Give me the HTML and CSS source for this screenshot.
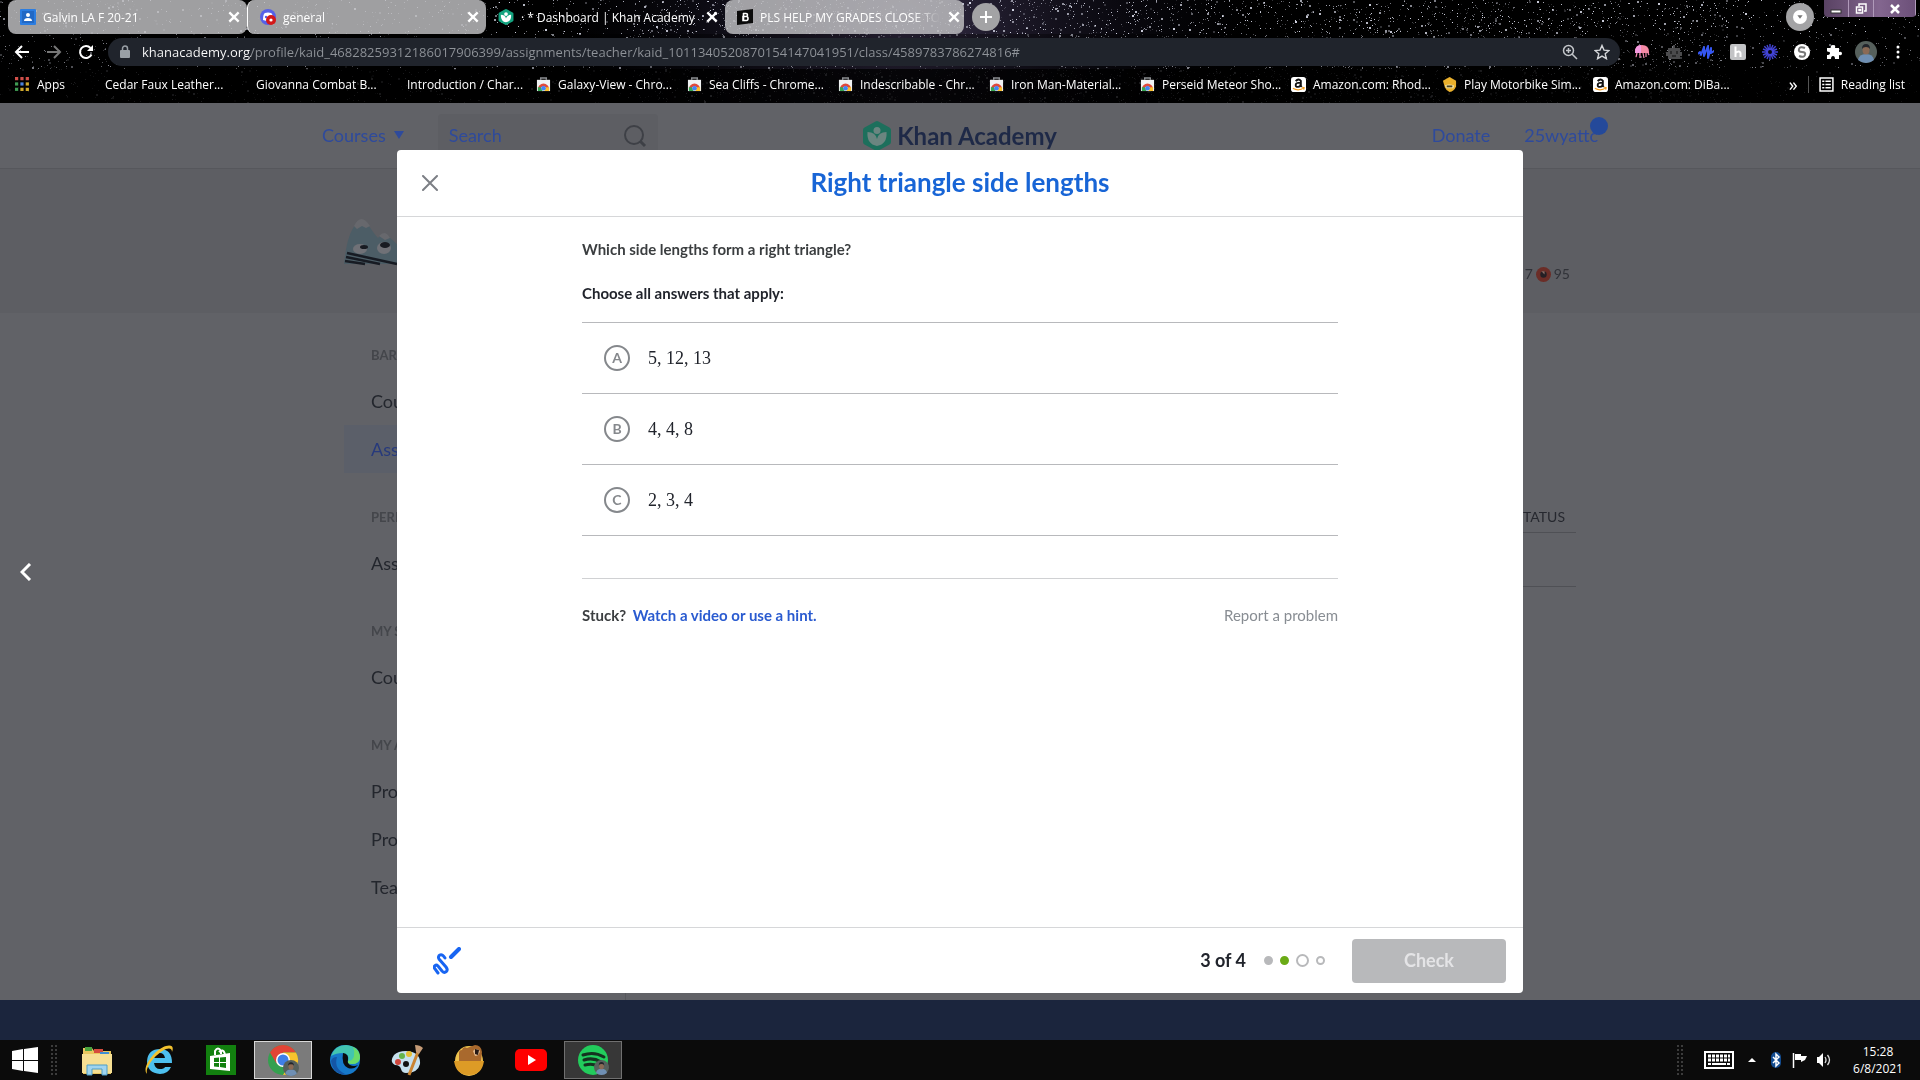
FILE: index.html
```html
<!DOCTYPE html>
<html lang="en">
  <head>
    <meta charset="UTF-8" />
    <meta name="viewport" content="width=device-width, initial-scale=1.0" />
    <title>Dashboard | Khan Academy</title>
    <link rel="stylesheet" href="styles.css">
  </head>
  <body>
    <svg class="symbols" aria-hidden="true">
      <symbol id="webstore" viewBox="0 0 16 16">
        <path d="M5 3V1h6v2" fill="none" stroke="#8a8d91" stroke-width="1.5" />
        <path d="M1 3h14v12H1z" fill="#f1f3f4" />
        <path d="M2 13a6 6 0 0 1 12 0l-3 0a3 3 0 0 0-6 0z" fill="#e04a3c" />
        <path d="M2 11v4h5l-2-4z" fill="#35a853" />
        <path d="M14 11v4H9l2-4z" fill="#fbc02d" />
        <circle cx="8" cy="12" r="2.5" fill="#4285f4" />
      </symbol>
      <symbol id="amazon" viewBox="0 0 16 16">
        <rect width="16" height="16" rx="3" fill="#fff" />
        <path d="M5 4.500Q8 1 10.500 4v5.500l1 1M10.300 6Q5 6 5 8.500t2.500 2q2.800 0 2.800-3" fill="none" stroke="#111" stroke-width="2" />
        <path d="M2 12q6 3.500 12-.500M12 11l2 .500-.500 2" fill="none" stroke="#f49b1a" stroke-width="1.300" />
      </symbol>
      <symbol id="leaf" viewBox="0 0 28 30">
        <path d="M12.500.5q1.500-.8 3 0l11 6q1.500 1 1.500 2.500v12q0 1.700-1.500 2.500l-11 6q-1.500.8-3 0l-11-6Q0 22.700 0 21V9q0-1.600 1.500-2.500z" />
        <circle cx="14" cy="9.500" r="3.500" class="leaf-cut" />
        <path d="M4.500 11q8 0 9.500 7 1.500-7 9.500-7 1 12-9.500 14Q3.500 23 4.500 11z" class="leaf-cut" />
      </symbol>
      <symbol id="close" viewBox="0 0 12 12">
        <path d="M2 2l8 8M10 2l-8 8" fill="none" stroke="currentColor" stroke-width="2" />
      </symbol>
      <symbol id="user" viewBox="0 0 22 22">
        <circle cx="11" cy="11" r="11" fill="#56605c" />
        <path d="M3 19q1-6 8-6t8 6q-8 6-16 0z" fill="#6f8fb3" />
        <ellipse cx="11" cy="9" rx="3.500" ry="4.500" fill="#8b6a55" />
        <path d="M7 8q0-5 4-5t4 5q-1-2-4-2t-4 2z" fill="#22252b" />
      </symbol>
    </svg>

    <header class="browser">
      <canvas class="stars" id="stars"></canvas>

      <div class="tab-strip">
        <div class="tab tab-idle">
          <svg class="favicon" viewBox="0 0 16 16"><rect width="16" height="16" rx="1" fill="#2b7de1" /><rect x="2" y="2" width="12" height="12" fill="#2268c4" /><circle cx="8" cy="6" r="2" fill="#fff" /><path d="M4 12q0-3 4-3t4 3z" fill="#fff" /></svg>
          <span class="tab-title">Galvin LA F 20-21</span>
          <button class="tab-close" aria-label="Close tab"><svg><use href="#close" /></svg></button>
        </div>
        <div class="tab tab-idle">
          <svg class="favicon" viewBox="0 0 16 16"><circle cx="8" cy="8" r="8" fill="#5560e8" /><path d="M3 11q0-6 2-7 3-1 6 0 2 1 2 7-5 2-10 0z" fill="#fff" /><circle cx="6" cy="8" r="1.200" fill="#5560e8" /><circle cx="11" cy="11" r="5" fill="#d41818" /><circle cx="11" cy="11" r="1.600" fill="#fff" /></svg>
          <span class="tab-title">general</span>
          <button class="tab-close" aria-label="Close tab"><svg><use href="#close" /></svg></button>
        </div>
        <div class="tab">
          <svg class="favicon favicon-khan"><use href="#leaf" /></svg>
          <span class="tab-title">· * Dashboard | Khan Academy</span>
          <button class="tab-close" aria-label="Close tab"><svg><use href="#close" /></svg></button>
        </div>
        <div class="tab tab-idle">
          <svg class="favicon" viewBox="0 0 16 16"><path d="M0 2l16-2v14L0 16z" fill="#0b0b0b" /><path d="M6 4.500h3q1.500 0 1.500 1.500T9 7.500H6M6 7.500h3.500q1.500 0 1.500 2t-1.500 2H6zM6.500 4v8" fill="none" stroke="#fff" stroke-width="1.600" /></svg>
          <span class="tab-title tab-title-fade">PLS HELP MY GRADES CLOSE TO</span>
          <button class="tab-close" aria-label="Close tab"><svg><use href="#close" /></svg></button>
        </div>
        <button class="round-button new-tab" aria-label="New tab">
          <svg viewBox="0 0 14 14"><path d="M7 1v12M1 7h12" stroke="#fff" stroke-width="2" /></svg>
        </button>
        <button class="round-button tab-search" aria-label="Search tabs">
          <svg viewBox="0 0 16 16"><circle cx="8" cy="8" r="8" fill="#fff" /><path d="M5 6h6l-3 4z" fill="#777" /></svg>
        </button>
        <div class="window-controls">
          <button aria-label="Minimize"><svg viewBox="0 0 14 12"><rect x="2" y="7" width="10" height="3" fill="#fff" stroke="#333" /></svg></button>
          <button aria-label="Restore"><svg viewBox="0 0 14 12"><path d="M5 3V1h7v7h-2M2.500 4h6v6h-6zM5 6.500h1.500v1H5z" fill="none" stroke="#fff" stroke-width="1.500" /></svg></button>
          <button class="window-close" aria-label="Close"><svg viewBox="0 0 14 12"><path d="M3 2l8 8M11 2l-8 8" stroke="#fff" stroke-width="2.500" /></svg></button>
        </div>
      </div>

      <div class="toolbar">
        <button class="tool" aria-label="Back"><svg viewBox="0 0 16 16"><path d="M15 8H2M8 2L2 8l6 6" fill="none" stroke="#fff" stroke-width="2" /></svg></button>
        <button class="tool" aria-label="Forward"><svg viewBox="0 0 16 16"><path d="M1 8h13M8 2l6 6-6 6" fill="none" stroke="#777" stroke-width="2" /></svg></button>
        <button class="tool" aria-label="Reload"><svg viewBox="0 0 16 16"><path d="M13.500 10.500A6 6 0 1 1 12.500 4" fill="none" stroke="#fff" stroke-width="2" /><path d="M15 1v6H9z" fill="#fff" /></svg></button>
        <div class="address-bar">
          <svg class="lock" viewBox="0 0 10 14"><rect y="5" width="10" height="8" rx="1" fill="#9aa0a6" /><path d="M2.500 6V3.500a2.500 2.500 0 0 1 5 0V6" fill="none" stroke="#9aa0a6" stroke-width="1.500" /></svg>
          <input class="address" type="text" aria-label="Address" value="khanacademy.org/profile/kaid_46828259312186017906399/assignments/teacher/kaid_1011340520870154147041951/class/4589783786274816#">
          <button class="tool" aria-label="Zoom"><svg viewBox="0 0 16 16"><circle cx="6.500" cy="6.500" r="5" fill="none" stroke="#c3c6ca" stroke-width="1.500" /><path d="M10 10l5 5M4 6.500h5M6.500 4v5" stroke="#c3c6ca" stroke-width="1.500" /></svg></button>
          <button class="tool" aria-label="Bookmark this tab"><svg viewBox="0 0 16 16"><path d="M8 1.500l2 4.600 5 .4-3.800 3.300 1.200 4.900L8 12.100l-4.400 2.600 1.200-4.900L1 6.500l5-.4z" fill="none" stroke="#d5d7da" stroke-width="1.400" /></svg></button>
        </div>
        <div class="extensions">
          <button class="tool" aria-label="Jellyfish"><svg viewBox="0 0 16 16"><path d="M1 8q0-7 7-7t7 7v1H1z" fill="#f58aa5" /><path d="M1 8q0-7 6-7v8H1z" fill="#f59ae0" /><path d="M3 9l-1 4M6 9v5M9 9l1 5M12 9v4M14 9l1 2" stroke="#f58ab0" stroke-width="1.200" /></svg></button>
          <button class="tool" aria-label="Robot"><svg viewBox="0 0 16 16"><path d="M7 1h2v3h5v4h2v4h-2v3H2v-3H0V8h2V4h5z" fill="#4b4b4d" /><path d="M5 7v3M11 7v3M6 12h4" stroke="#222" stroke-width="1.500" /></svg></button>
          <button class="tool" aria-label="Voice"><svg viewBox="0 0 16 16"><path d="M0 10l2-2 1 3 3-8v9l4-10v12l3-10v5l3-2" fill="none" stroke="#3556f2" stroke-width="2" stroke-linejoin="round" /></svg></button>
          <button class="tool" aria-label="Honey"><svg viewBox="0 0 16 16"><rect width="16" height="16" rx="2" fill="#c2c3c5" /><path d="M5.500 2.500v10.500M5.500 9q4-3 5 0v4" fill="none" stroke="#fff" stroke-width="2" /></svg></button>
          <button class="tool" aria-label="Loom"><svg viewBox="0 0 16 16"><path d="M8 0v16M0 8h16M2.300 2.300l11.400 11.400M13.700 2.300L2.300 13.700M5 1l6 14M11 1L5 15M1 5l14 6M15 5L1 11" stroke="#4344d8" stroke-width="1.400" /><circle cx="8" cy="8" r="3" fill="#4344d8" /><circle cx="8" cy="8" r="2" fill="#05050a" /></svg></button>
          <button class="tool" aria-label="Shop"><svg viewBox="0 0 16 16"><circle cx="8" cy="8" r="8" fill="#fff" /><path d="M11 4q-5-2-6 1t3 3 3 3-6 1" fill="none" stroke="#777" stroke-width="2" /></svg></button>
          <button class="tool" aria-label="Extensions"><svg viewBox="0 0 16 16"><path d="M1 4h4q-1-3 2-3t2 3h4v4q3-1 3 1.500T13 11v4H9q0-3-2-3t-2 3H1v-4q3 0 3-2T1 7.500z" fill="#fff" /></svg></button>
          <button class="tool tool-user" aria-label="Profile"><svg><use href="#user" /></svg></button>
          <button class="tool" aria-label="Menu"><svg viewBox="0 0 16 16"><circle cx="8" cy="3" r="1.500" fill="#fff" /><circle cx="8" cy="8" r="1.500" fill="#fff" /><circle cx="8" cy="13" r="1.500" fill="#fff" /></svg></button>
        </div>
      </div>

      <nav class="bookmarks">
        <a href="#" class="apps">
          <svg viewBox="0 0 14 14"><path d="M0 0h3v3H0zM5 0h3v3H5zM10 0h3v3h-3z" fill="#d2504a" /><path d="M0 5h3v3H0z" fill="#3f9b53" /><path d="M5 5h3v3H5z" fill="#4b83dd" /><path d="M10 5h3v3h-3z" fill="#d0a92d" /><path d="M0 10h3v3H0z" fill="#3f9b53" /><path d="M5 10h3v3H5zM10 10h3v3h-3z" fill="#d0a92d" /></svg>
          Apps
        </a>
        <a href="#"><svg></svg>Cedar Faux Leather...</a>
        <a href="#"><svg></svg>Giovanna Combat B...</a>
        <a href="#"><svg></svg>Introduction / Char...</a>
        <a href="#"><svg><use href="#webstore" /></svg>Galaxy-View - Chro...</a>
        <a href="#"><svg><use href="#webstore" /></svg>Sea Cliffs - Chrome...</a>
        <a href="#"><svg><use href="#webstore" /></svg>Indescribable - Chr...</a>
        <a href="#"><svg><use href="#webstore" /></svg>Iron Man-Material...</a>
        <a href="#"><svg><use href="#webstore" /></svg>Perseid Meteor Sho...</a>
        <a href="#"><svg><use href="#amazon" /></svg>Amazon.com: Rhod...</a>
        <a href="#"><svg viewBox="0 0 16 16"><path d="M8 0l7 4v6q-2 5-7 6-4-2-5-5L1 4z" fill="#eab02c" /><path d="M3 9q4-2 10 0l-1 3H5z" fill="#f5e6a8" /><path d="M5 10h6" stroke="#4b4320" stroke-width="2" /></svg>Play Motorbike Sim...</a>
        <a href="#"><svg><use href="#amazon" /></svg>Amazon.com: DiBa...</a>
        <button class="more" aria-label="More bookmarks">»</button>
        <a href="#" class="reading-list">
          <svg viewBox="0 0 14 14"><path d="M1 1h12v12H1zM3 4h2M6 4h5M3 7h2M6 7h5M3 10h2M6 10h5" fill="none" stroke="#fff" stroke-width="1.400" /></svg>
          Reading list
        </a>
      </nav>
    </header>

    <div class="page">
      <header class="site-header">
        <div class="site-header-inner">
          <div class="header-left">
            <a href="#" class="header-link">Courses <svg viewBox="0 0 10 8"><path d="M0 0h10L5 8z" fill="currentColor" /></svg></a>
            <label class="search">
              <input type="text" placeholder="Search" aria-label="Search">
              <svg viewBox="0 0 24 24"><circle cx="11" cy="11" r="9" fill="none" stroke="currentColor" stroke-width="2" /><path d="M17 17l5 5" stroke="currentColor" stroke-width="3" /></svg>
            </label>
          </div>
          <a href="#" class="logo"><svg><use href="#leaf" /></svg>Khan Academy</a>
          <div class="header-right">
            <a href="#" class="header-link">Donate</a>
            <a href="#" class="header-link user-link">25wyattc<span class="badge"></span></a>
          </div>
        </div>
      </header>

      <div class="banner">
        <div class="banner-inner">
          <svg class="avatar" viewBox="0 0 80 50">
            <path d="M0 48Q3 18 12 8q6-8 13 2 6 9 9 12 6-7 11-1 15 12 22 27z" fill="#4c5d66" />
            <path d="M10 10q7-14 16 0l-4 2-4-2-5 3zM35 20q6-7 11 2l-5 2z" fill="#67686d" />
            <ellipse cx="16" cy="33" rx="7" ry="5" fill="#707177" /><ellipse cx="40" cy="32" rx="7" ry="6" fill="#707177" />
            <ellipse cx="20" cy="31" rx="4" ry="2" fill="#181b22" /><ellipse cx="41" cy="29" rx="5" ry="3" fill="#181b22" />
            <path d="M3 37l50 11M2 41l34 7M1 45l20 3" stroke="#171b23" stroke-width="2.500" />
          </svg>
          <div class="points">
            <span>7</span>
            <svg viewBox="0 0 14 14"><circle cx="7" cy="7" r="7" fill="#6b2d27" /><circle cx="7" cy="7" r="3" fill="#241f24" /><path d="M5 4h3v3z" fill="#8b6a62" /></svg>
            <span>95</span>
          </div>
        </div>
      </div>

      <div class="content">
        <nav class="sidebar">
          <h2>BARRETT MATH</h2>
          <a href="#">Course mastery</a>
          <a href="#" class="active">Assignments</a>
          <h2>PERIOD 2</h2>
          <a href="#">Assignments</a>
          <h2>MY STUFF</h2>
          <a href="#">Courses</a>
          <h2>MY ACCOUNT</h2>
          <a href="#">Progress</a>
          <a href="#">Profile</a>
          <a href="#">Teachers</a>
        </nav>
        <main class="assignments">
          <table>
            <thead><tr><th>STATUS</th></tr></thead>
            <tbody><tr><td></td></tr></tbody>
          </table>
        </main>
      </div>

      <div class="overlay">
        <button class="previous" aria-label="Previous"><svg viewBox="0 0 12 18"><path d="M10 1L2 9l8 8" fill="none" stroke="#fff" stroke-width="3" /></svg></button>
        <section class="modal" role="dialog" aria-labelledby="exerciseTitle">
          <div class="modal-header">
            <button class="modal-close" aria-label="Close"><svg viewBox="0 0 16 16"><path d="M1 1l14 14M15 1L1 15" stroke="currentColor" stroke-width="2" stroke-linecap="round" /></svg></button>
            <h1 id="exerciseTitle">Right triangle side lengths</h1>
          </div>
          <div class="modal-body">
            <p class="question">Which side lengths form a right triangle?</p>
            <fieldset class="choices">
              <legend>Choose all answers that apply:</legend>
              <label class="choice">
                <span class="bubble"><input type="checkbox" name="answer"><span>A</span></span>
                <span class="math">5, 12, 13</span>
              </label>
              <label class="choice">
                <span class="bubble"><input type="checkbox" name="answer"><span>B</span></span>
                <span class="math">4, 4, 8</span>
              </label>
              <label class="choice">
                <span class="bubble"><input type="checkbox" name="answer"><span>C</span></span>
                <span class="math">2, 3, 4</span>
              </label>
            </fieldset>
            <div class="help">
              <p>Stuck? <a href="#">Watch a video or use a hint.</a></p>
              <a href="#" class="report">Report a problem</a>
            </div>
          </div>
          <div class="modal-footer">
            <button class="scratchpad" aria-label="Show scratchpad"><svg viewBox="0 0 28 28"><path d="M12 11C8 5 4 9 6 12l7 8c3 4-1 7-4 4l-4-5c-2-2-5 0-3 3l3 4" fill="none" stroke="#1865f2" stroke-width="3" stroke-linecap="round" /><path d="M26 2l-8 8" stroke="#1865f2" stroke-width="4" stroke-linecap="round" /></svg></button>
            <span class="progress-text">3 of 4</span>
            <div class="dots">
              <span class="dot dot-done"></span>
              <span class="dot dot-correct"></span>
              <span class="dot dot-current"></span>
              <span class="dot"></span>
            </div>
            <button class="check" disabled>Check</button>
          </div>
        </section>
      </div>
    </div>

    <div class="page-footer"></div>

    <footer class="taskbar">
      <button class="start" aria-label="Start"><svg viewBox="0 0 26 26"><path d="M0 4l11-2v11H0zM12 2l14-2v13H12zM0 14h11v10L0 22zM12 14h14v12l-14-2z" fill="#fff" /></svg></button>
      <span class="grip"></span>
      <div class="task-list">
        <button class="task" aria-label="File Explorer"><svg viewBox="0 0 32 32"><path d="M2 4h9l2 3h17v23H2z" fill="#e9c75f" /><path d="M4 3h7v4H4z" fill="#4aa33e" /><path d="M13 5h9v4h-9z" fill="#d64b3d" /><path d="M19 8h9v4h-9z" fill="#3f8dd4" /><path d="M1 10h30v19H1z" fill="#f6df93" /><path d="M6 31V21h20v10h-5v-6H11v6z" fill="#9fd4ef" stroke="#4d9dc6" /></svg></button>
        <button class="task" aria-label="Internet Explorer"><svg viewBox="0 0 32 32"><path d="M29 19H11q1 6 6 6 4 0 5-2h6q-3 7-11 7Q4 29 4 17 5 5 17 5t12 14zM11 14h11q-1-5-5-5t-6 5z" fill="#4dc0ef" /><path d="M4 30C-2 24 12 5 23 2q9-2 6 6 0-5-6-3C14 9 2 22 4 30z" fill="#f3c22f" /></svg></button>
        <button class="task" aria-label="Store"><svg viewBox="0 0 32 32"><path d="M1 1h30v30H1z" fill="#12800f" /><path d="M5 12l20-3v18L5 25z" fill="#fff" /><path d="M10 11V7q3-5 6 0v3M14 8q4-4 6 2" fill="none" stroke="#fff" stroke-width="2" /><path d="M9 14l5-.500V18H9zM15 13.500l6-.500v5h-6zM9 19h5v4l-5-.500zM15 19h6v5l-6-1z" fill="#12800f" /></svg></button>
        <button class="task task-focus" aria-label="Google Chrome"><svg viewBox="0 0 32 32"><circle cx="16" cy="16" r="15" fill="#34a04f" /><path d="M3 8.500A15 15 0 0 1 29 8.500H16l-6.500 11z" fill="#e24436" /><path d="M29 8.500A15 15 0 0 1 16 31l6.500-11L16 8.500z" fill="#f9c32d" /><circle cx="16" cy="16" r="7" fill="#fff" /><circle cx="16" cy="16" r="5.500" fill="#3f7fe8" /><use href="#user" x="16" y="16" width="16" height="16" /></svg></button>
        <button class="task" aria-label="Microsoft Edge"><svg viewBox="0 0 32 32"><circle cx="16" cy="16" r="15" fill="#1679ca" /><path d="M2 12Q6 1 17 1q14 1 14 12 0 7-8 7-5 0-4-3 2-7-5-8-7 0-12 3z" fill="#42c5b0" /><path d="M24 3q7 4 7 11-1 6-8 6-5 0-4-3 5 0 6-5t-1-9z" fill="#6bdc69" /><path d="M14 9q6 1 5 7-1 3 2 5 4 2 8 0-4 5-10 3-7-3-5-15z" fill="#0b0c0d" /><path d="M8 13q-4 13 11 18Q4 31 2 17q1-4 6-4z" fill="#1456a6" /></svg></button>
        <button class="task" aria-label="Paint"><svg viewBox="0 0 32 32"><path d="M15 7q15 1 14 13-2 9-14 9-4 0-5-4t-6-4Q-2 18 3 11q4-4 12-4z" fill="#c6e0ee" /><circle cx="7" cy="18" r="3" fill="#cf463c" /><circle cx="11" cy="12" r="3" fill="#65b44b" /><circle cx="18" cy="10" r="3" fill="#e6be35" /><circle cx="15" cy="20" r="3" fill="#111" /><path d="M27 8L18 31" stroke="#c98332" stroke-width="3" /><path d="M24 1q5 0 8 3l-4 6-3-2z" fill="#c59b76" /></svg></button>
        <button class="task" aria-label="Bear"><svg viewBox="0 0 32 32"><ellipse cx="16" cy="17" rx="14" ry="15" fill="#f0c34d" /><path d="M6 17V9q0-3 3-3 1-4 5-2l8-3q6 0 7 7l-1 9z" fill="#a9692d" /><path d="M20 7q3-4 7 0-1 5-5 5z" fill="#e4b98c" /><path d="M22 5l4 1-1 5-3-1z" fill="#241814" /><path d="M1 17h30q-2 14-15 14T1 17z" fill="#dd9b26" /></svg></button>
        <button class="task" aria-label="YouTube"><svg viewBox="0 0 32 32"><rect y="5" width="32" height="22" rx="5" fill="#f00" /><path d="M13 11v10l8-5z" fill="#fff" /></svg></button>
        <button class="task task-open" aria-label="Spotify"><svg viewBox="0 0 32 32"><circle cx="16" cy="16" r="15" fill="#22cc5c" /><path d="M6 11q11-4 21 2M7 16q9-3 17 2M8 21q7-2 13 1" fill="none" stroke="#14321f" stroke-width="3" stroke-linecap="round" /><use href="#user" x="17" y="16" width="15" height="15" /></svg></button>
      </div>
      <div class="tray">
        <span class="grip"></span>
        <svg class="keyboard" viewBox="0 0 30 18"><path d="M1 1h28v16H1z" fill="none" stroke="#fff" stroke-width="2" /><path d="M4 5h22M4 9h22" stroke="#fff" stroke-width="3" stroke-dasharray="3 1" /><path d="M4 13h3M8 13h14M23 13h3" stroke="#fff" stroke-width="2" /></svg>
        <svg class="arrow-up" viewBox="0 0 8 4"><path d="M0 4l4-4 4 4z" fill="#fff" /></svg>
        <svg class="tray-icon" viewBox="0 0 16 16"><rect x="3" width="10" height="16" rx="5" fill="#124b8f" /><path d="M5 5l6 6-3 3V2l3 3-6 6" fill="none" stroke="#fff" stroke-width="1.500" /></svg>
        <svg class="tray-icon" viewBox="0 0 16 16"><path d="M1.500 1v15" stroke="#fff" stroke-width="1.500" /><path d="M3 2h6v2h6l-2 4-4 2V8H3z" fill="#fff" /></svg>
        <svg class="tray-icon" viewBox="0 0 16 16"><path d="M1 5h2l4-4v14l-4-4H1z" fill="#fff" /><path d="M9 5q2 3 0 6M11.500 3q4 5 0 10" fill="none" stroke="#ddd" stroke-width="1.300" /></svg>
        <div class="clock"><span>15:28</span><span>6/8/2021</span></div>
      </div>
    </footer>

    <script src="stars.js"></script>
  </body>
</html>
```

FILE: styles.css
```css
* {
  box-sizing: border-box;
}

body {
  display: flex;
  flex-direction: column;
  height: 100vh;
  margin: 0;
  font-family: "Lato", Arial, sans-serif;
  font-size: 15px;
  color: #21242c;
  background: #616267;
  overflow: hidden;
}

button {
  display: flex;
  align-items: center;
  justify-content: center;
  padding: 0;
  border: none;
  background: none;
  font-family: inherit;
  cursor: pointer;
}

a {
  color: inherit;
  text-decoration: none;
}

svg {
  display: block;
  flex: none;
}

h1,
h2,
p {
  margin: 0;
}

.symbols {
  position: absolute;
  width: 0;
  height: 0;
}

.leaf-cut {
  fill: var(--leaf-cut, #fff);
}

/* browser window */
.browser {
  position: relative;
  flex: none;
  font-family: "Open Sans", "Noto Sans", sans-serif;
  font-size: 12px;
  color: #fff;
  background: #000;
}

.stars {
  position: absolute;
  top: 0;
  left: 0;
  width: 100%;
  height: 100%;
}

.tab-strip,
.toolbar,
.bookmarks {
  position: relative;
  display: flex;
  align-items: center;
}

.tab-strip {
  height: 34px;
  padding-left: 8px;
}

.tab {
  display: flex;
  align-items: center;
  gap: 7px;
  flex: 0 1 239px;
  min-width: 0;
  height: 34px;
  padding: 0 6px 0 12px;
  border-radius: 8px;
}

.tab-idle {
  background: rgba(190, 190, 192, 0.84);
}

.tab-idle + .tab-idle {
  border-left: 1px solid #fff;
}

.favicon {
  width: 16px;
  height: 16px;
}

.favicon-khan {
  fill: #14a37f;
}

.tab-title {
  flex: 1;
  white-space: nowrap;
}

.tab-title-fade {
  mask-image: linear-gradient(to right, #000 85%, transparent);
}

.tab-close,
.tab-close svg {
  width: 14px;
  height: 14px;
  color: #fff;
}

.round-button {
  width: 28px;
  height: 28px;
  border-radius: 50%;
  background: #a3a3a5;
}

.round-button svg {
  width: 14px;
  height: 14px;
}

.new-tab {
  margin-left: 8px;
}

.tab-search {
  margin-left: auto;
  margin-right: 10px;
}

.window-controls {
  display: flex;
  align-self: flex-start;
  margin-right: 4px;
  border-radius: 0 0 4px 4px;
  background: linear-gradient(to right, #594263, #83668f 60%, #6b4f78);
  overflow: hidden;
}

.window-controls button {
  width: 25px;
  height: 17px;
  border-right: 1px solid #b09aba;
}

.window-controls svg {
  width: 14px;
  height: 12px;
}

.window-controls .window-close {
  width: 42px;
}

.toolbar {
  height: 35px;
  padding: 0 6px;
}

.tool {
  flex: none;
  width: 32px;
  height: 28px;
}

.tool svg {
  width: 16px;
  height: 16px;
}

.tool-user svg {
  width: 22px;
  height: 22px;
}

.address-bar {
  display: flex;
  align-items: center;
  flex: 1;
  height: 28px;
  margin: 4px 6px;
  padding: 0 2px 0 12px;
  border-radius: 14px;
  background: #20242c;
}

.lock {
  width: 10px;
  height: 14px;
}

.address {
  flex: 1;
  min-width: 0;
  margin-left: 12px;
  padding: 0;
  border: none;
  outline: none;
  font-family: "Open Sans", "Noto Sans", sans-serif;
  font-size: 13px;
  color: #999da3;
  /* host name white, path grey */
  background: linear-gradient(to right, #fff 109px, #8f9399 109px);
  background-clip: text;
  -webkit-background-clip: text;
  -webkit-text-fill-color: transparent;
}

.extensions {
  display: flex;
}

.bookmarks {
  height: 34px;
  padding: 0 15px 4px;
}

.bookmarks a {
  display: flex;
  align-items: center;
  gap: 7px;
  flex: 0 1 151px;
  white-space: nowrap;
}

.bookmarks svg {
  width: 15px;
  height: 15px;
}

.bookmarks .apps {
  flex-basis: 68px;
}

.more {
  margin-left: auto;
  padding: 0 10px;
  color: #fff;
  font-size: 18px;
  line-height: 20px;
}

.bookmarks .reading-list {
  flex: none;
  padding-left: 10px;
  border-left: 1px solid #555;
}

/* page behind the exercise */
.page {
  position: relative;
  flex: 1;
  min-height: 0;
  overflow: hidden;
}

.site-header {
  border-bottom: 1px solid #56575c;
}

.site-header-inner {
  display: grid;
  grid-template-columns: 1fr auto 1fr;
  align-items: center;
  max-width: 1276px;
  height: 65px;
  margin: 0 auto;
}

.header-left,
.header-right {
  display: flex;
  align-items: center;
  gap: 34px;
}

.header-right {
  justify-content: flex-end;
}

.header-link {
  display: flex;
  align-items: center;
  gap: 8px;
  font-size: 18px;
  line-height: 24px;
  padding-bottom: 2px;
  color: #2e4a9c;
}

.header-link svg {
  width: 10px;
  height: 8px;
}

.search {
  display: flex;
  align-items: center;
  width: 220px;
  height: 44px;
  padding: 0 11px;
  border-radius: 4px;
  background: #5d5e63;
  color: #3e4046;
}

.search input {
  flex: 1;
  min-width: 0;
  padding: 0 0 2px;
  border: none;
  background: none;
  font-family: inherit;
  font-size: 18px;
}

.search input::placeholder {
  color: #2e4a9c;
}

.search svg {
  width: 24px;
  height: 24px;
}

.logo {
  --leaf-cut: #6b8580;
  display: flex;
  align-items: center;
  gap: 6px;
  font-size: 24px;
  font-weight: 700;
  color: #1e2947;
}

.logo svg {
  width: 28px;
  height: 30px;
  fill: #1d6f5c;
}

.user-link {
  position: relative;
}

.badge {
  position: absolute;
  top: -6px;
  right: -10px;
  width: 18px;
  height: 18px;
  border-radius: 50%;
  background: #24499a;
}

.banner {
  background: #5d5e63;
}

.banner-inner {
  display: flex;
  align-items: center;
  justify-content: space-between;
  max-width: 1232px;
  height: 144px;
  margin: 0 auto;
}

.avatar {
  width: 80px;
  height: 50px;
}

.points {
  display: flex;
  align-items: center;
  gap: 3px;
  align-self: flex-end;
  padding: 0 6px 29px 0;
  font-size: 14px;
  line-height: 20px;
  color: #303238;
}

.points svg {
  width: 15px;
  height: 15px;
}

.content {
  display: flex;
  max-width: 1232px;
  height: 100%;
  margin: 0 auto;
}

.sidebar {
  width: 282px;
  padding-top: 28px;
  border-right: 1px solid #56575c;
}

.sidebar h2 {
  margin: 0 0 8px;
  padding-left: 27px;
  font-size: 13px;
  font-weight: 700;
  line-height: 28px;
  color: #44464b;
}

.sidebar a {
  display: block;
  padding-left: 27px;
  font-size: 18px;
  line-height: 48px;
  color: #23262d;
}

.sidebar a + h2 {
  margin-top: 30px;
}

.sidebar .active {
  background: #5b5f69;
  color: #273a7c;
}

.assignments {
  flex: 1;
  padding-top: 189px;
}

.assignments table {
  width: 100%;
  border-collapse: collapse;
}

.assignments th {
  height: 30px;
  padding: 0 11px 0 0;
  border-bottom: 1px solid #4f5055;
  font-size: 14px;
  font-weight: 400;
  text-align: right;
  color: #26282f;
}

.assignments td {
  height: 54px;
  border-bottom: 1px solid #4f5055;
}

/* exercise */
.overlay {
  position: absolute;
  inset: 0;
  display: flex;
  justify-content: center;
  padding: 47px 0 7px;
}

.previous {
  position: absolute;
  top: 50%;
  left: 10px;
  width: 32px;
  height: 40px;
}

.previous svg {
  width: 12px;
  height: 18px;
}

.modal {
  display: flex;
  flex-direction: column;
  width: 100%;
  max-width: 1126px;
  border-radius: 4px;
  background: #fff;
}

.modal-header {
  display: grid;
  grid-template-columns: 66px 1fr 66px;
  align-items: center;
  height: 67px;
  border-bottom: 1px solid #d6d7d9;
}

.modal-header h1 {
  padding-bottom: 3px;
  font-size: 26px;
  line-height: 32px;
  text-align: center;
  color: #1865d6;
}

.modal-close {
  height: 40px;
  color: #7c7f85;
}

.modal-close svg {
  width: 16px;
  height: 16px;
}

.modal-body {
  flex: 1;
  width: 100%;
  max-width: 756px;
  margin: 0 auto;
  padding-top: 22px;
  font-weight: 700;
}

.question {
  line-height: 20px;
  color: #3b3e40;
}

.choices {
  margin: 24px 0 42px;
  padding: 0;
  border: none;
}

.choices legend {
  padding: 0 0 19px;
  line-height: 20px;
}

.choice {
  display: flex;
  align-items: center;
  gap: 18px;
  height: 71px;
  padding-left: 22px;
  border-bottom: 1px solid #b8b9bc;
}

legend + .choice {
  height: 72px;
  border-top: 1px solid #b8b9bc;
}

.bubble {
  display: grid;
  place-items: center;
  font-size: 14px;
  line-height: 26px;
  color: #85888c;
}

.bubble > * {
  grid-area: 1 / 1;
}

.bubble input {
  appearance: none;
  width: 26px;
  height: 26px;
  margin: 0;
  border: 2px solid #85888c;
  border-radius: 50%;
}

.math {
  font-family: "Liberation Serif", "Times New Roman", serif;
  font-size: 18px;
  font-weight: 400;
}

.help {
  display: flex;
  justify-content: space-between;
  padding-top: 26px;
  border-top: 1px solid #d0d1d3;
  line-height: 20px;
  color: #3b3e40;
}

.help p a {
  margin-left: 3px;
  color: #2a5bd0;
}

.help .report {
  font-weight: 400;
  color: #888d93;
}

.modal-footer {
  display: flex;
  align-items: center;
  height: 66px;
  padding: 0 17px 0 36px;
  border-top: 1px solid #d6d7d9;
}

.scratchpad,
.scratchpad svg {
  width: 28px;
  height: 28px;
}

.progress-text {
  margin-left: auto;
  padding-bottom: 2px;
  font-size: 18px;
  font-weight: 700;
}

.dots {
  display: flex;
  align-items: center;
  gap: 7px;
  margin: 0 27px 0 18px;
}

.dot {
  width: 9px;
  height: 9px;
  border: 2px solid #b8b9bb;
  border-radius: 50%;
}

.dot-done {
  background: #b8b9bb;
}

.dot-correct {
  border-color: #6bab16;
  background: #6bab16;
}

.dot-current {
  width: 13px;
  height: 13px;
}

.check {
  width: 154px;
  height: 44px;
  padding-bottom: 2px;
  border-radius: 4px;
  font-size: 18px;
  font-weight: 700;
  color: #e4e4e6;
  background: #b8b9bb;
}

.page-footer {
  flex: none;
  height: 40px;
  background: #1b253d;
}

/* taskbar */
.taskbar {
  display: flex;
  align-items: center;
  flex: none;
  height: 40px;
  font-family: "Open Sans", "Noto Sans", sans-serif;
  font-size: 12px;
  color: #fff;
  background: #0b0b0b;
}

.start {
  width: 50px;
  height: 40px;
}

.start svg {
  width: 26px;
  height: 26px;
}

.grip {
  width: 8px;
  height: 32px;
  background: radial-gradient(circle, #3c3c3c 1px, transparent 1px) 0 0 / 4px 4px;
}

.task-list {
  display: flex;
  gap: 4px;
  margin-left: 10px;
}

.task {
  width: 58px;
  height: 38px;
}

.task svg {
  width: 32px;
  height: 32px;
}

.task-focus {
  border: 1px solid #d8d8d8;
  background: #7b7b7b;
}

.task-open {
  border: 1px solid #707070;
  background: #373737;
}

.tray {
  display: flex;
  align-items: center;
  margin-left: auto;
}

.keyboard {
  width: 30px;
  height: 18px;
  margin: 0 14px 0 20px;
}

.arrow-up {
  width: 8px;
  height: 4px;
  margin-right: 12px;
}

.tray-icon {
  width: 16px;
  height: 16px;
  margin-right: 8px;
}

.clock {
  display: flex;
  flex-direction: column;
  align-items: center;
  width: 76px;
  margin-right: 4px;
  line-height: 17px;
}
```

FILE: stars.js
```javascript
const canvas = document.getElementById("stars");
const ctx = canvas.getContext("2d");
canvas.width = canvas.clientWidth;
canvas.height = canvas.clientHeight;

// fixed seed so the sky does not change between loads
let seed = 7;
function random() {
  seed = (seed * 16807) % 2147483647;
  return seed / 2147483647;
}

const w = canvas.width;
const h = canvas.height;

const glow = ctx.createRadialGradient(w * 0.47, 20, 10, w * 0.47, 20, w * 0.18);
glow.addColorStop(0, "rgba(105, 90, 140, 0.5)");
glow.addColorStop(1, "rgba(20, 20, 45, 0)");
ctx.fillStyle = glow;
ctx.fillRect(0, 0, w, h);

for (let i = 0; i < 9500; i++) {
  const x = random() * w;
  const y = random() * h;
  const middle = x > w * 0.33 && x < w * 0.9;
  if (!middle && random() > 0.4) continue;
  const size = random() > 0.9 ? 2 : 1;
  ctx.fillStyle = `rgba(228, 230, 245, ${0.1 + random() * 0.8})`;
  ctx.fillRect(Math.floor(x), Math.floor(y), size, size);
}

// the toolbar and the bookmarks dim the picture
ctx.fillStyle = "rgba(0, 0, 0, 0.35)";
ctx.fillRect(0, 34, w, 35);
ctx.fillStyle = "rgba(0, 0, 0, 0.85)";
ctx.fillRect(0, 69, w, h - 69);
```
